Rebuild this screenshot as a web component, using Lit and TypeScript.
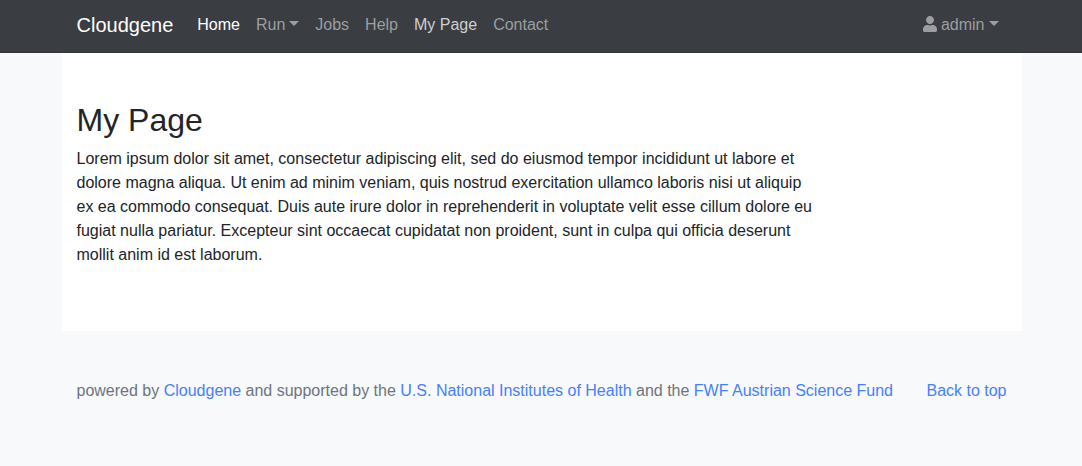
import { LitElement, html, css } from "lit";
import { customElement } from "lit/decorators.js";

@customElement("app-root")
export class AppRoot extends LitElement {
  static styles = css`
    :host {
      display: block;
      min-height: 100vh;
      background: #f8f9fb;
      color: #212529;
      font: 16px/24px "Liberation Sans", Arial, sans-serif;
    }
    * {
      box-sizing: border-box;
    }
    a {
      color: #4680ff;
      text-decoration: none;
    }
    .band {
      padding-left: 1px;
    }
    .container {
      width: 100%;
      max-width: 960px;
      margin: 0 auto;
      padding: 0 15px;
    }
    .navbar {
      background: #3a3d42;
      border-bottom: 1px solid #343539;
      padding-bottom: 2px;
    }
    .bar {
      display: flex;
      align-items: center;
    }
    .brand {
      margin-right: 16px;
      font-size: 20px;
      line-height: 30px;
      color: #fff;
    }
    .menu {
      display: flex;
      flex-wrap: wrap;
      margin: 0;
      padding: 0;
      list-style: none;
    }
    .user {
      margin-left: auto;
    }
    .link {
      display: flex;
      align-items: center;
      padding: 13px 8px;
      border: 0;
      background: none;
      font: inherit;
      color: #9c9ea0;
      cursor: pointer;
    }
    .active {
      color: #fff;
    }
    .hover,
    .link:hover {
      color: #cecfd0;
    }
    .caret {
      margin: 0 0 3px 4px;
      border: 5px solid transparent;
      border-top-color: currentColor;
      border-bottom: 0;
    }
    .icon {
      width: 14px;
      height: 16px;
      margin: 0 4px 2px 0;
      fill: currentColor;
    }
    .page {
      padding-top: 48px;
      padding-bottom: 64px;
      background: #fff;
    }
    h1 {
      margin: 0 0 8px;
      font-size: 32px;
      line-height: 38px;
      font-weight: 400;
    }
    p {
      margin: 0;
    }
    .text {
      max-width: 80%;
    }
    .footer {
      display: flex;
      justify-content: space-between;
      gap: 16px;
      padding-top: 48px;
      padding-bottom: 48px;
      color: #6c757d;
    }
  `;

  render() {
    return html`
      <nav class="band navbar">
        <div class="container bar">
          <a class="brand" href="#">Cloudgene</a>
          <ul class="menu">
            <li><a class="link active" href="#">Home</a></li>
            <li>
              <button class="link" type="button" aria-haspopup="true">Run<span class="caret"></span></button>
            </li>
            <li><a class="link" href="#jobs">Jobs</a></li>
            <li><a class="link" href="#help">Help</a></li>
            <li><a class="link hover" href="#my-page">My Page</a></li>
            <li><a class="link" href="#contact">Contact</a></li>
          </ul>
          <ul class="menu user">
            <li>
              <button class="link" type="button" aria-haspopup="true">
                <svg class="icon" viewBox="0 0 448 512" aria-hidden="true">
                  <path
                    d="M224 256c70.700 0 128-57.300 128-128S294.700 0 224 0 96 57.300 96 128s57.300 128 128 128zm89.600 32h-16.700c-22.200 10.200-46.900 16-72.900 16s-50.600-5.800-72.900-16h-16.700C60.200 288 0 348.200 0 422.400V464c0 26.500 21.500 48 48 48h352c26.500 0 48-21.500 48-48v-41.600c0-74.200-60.200-134.400-134.400-134.400z"
                  />
                </svg>
                admin<span class="caret"></span>
              </button>
            </li>
          </ul>
        </div>
      </nav>
      <main class="band">
        <section class="container page">
          <h1>My Page</h1>
          <p class="text">
            Lorem ipsum dolor sit amet, consectetur adipiscing elit, sed do eiusmod tempor incididunt ut labore et
            dolore magna aliqua. Ut enim ad minim veniam, quis nostrud exercitation ullamco laboris nisi ut aliquip ex
            ea commodo consequat. Duis aute irure dolor in reprehenderit in voluptate velit esse cillum dolore eu
            fugiat nulla pariatur. Excepteur sint occaecat cupidatat non proident, sunt in culpa qui officia deserunt
            mollit anim id est laborum.
          </p>
        </section>
      </main>
      <footer class="band">
        <div class="container footer">
          <p>
            powered by <a href="#cloudgene">Cloudgene</a> and supported by the
            <a href="#nih">U.S. National Institutes of Health</a> and the <a href="#fwf">FWF Austrian Science Fund</a>
          </p>
          <a href="#">Back to top</a>
        </div>
      </footer>
    `;
  }
}
